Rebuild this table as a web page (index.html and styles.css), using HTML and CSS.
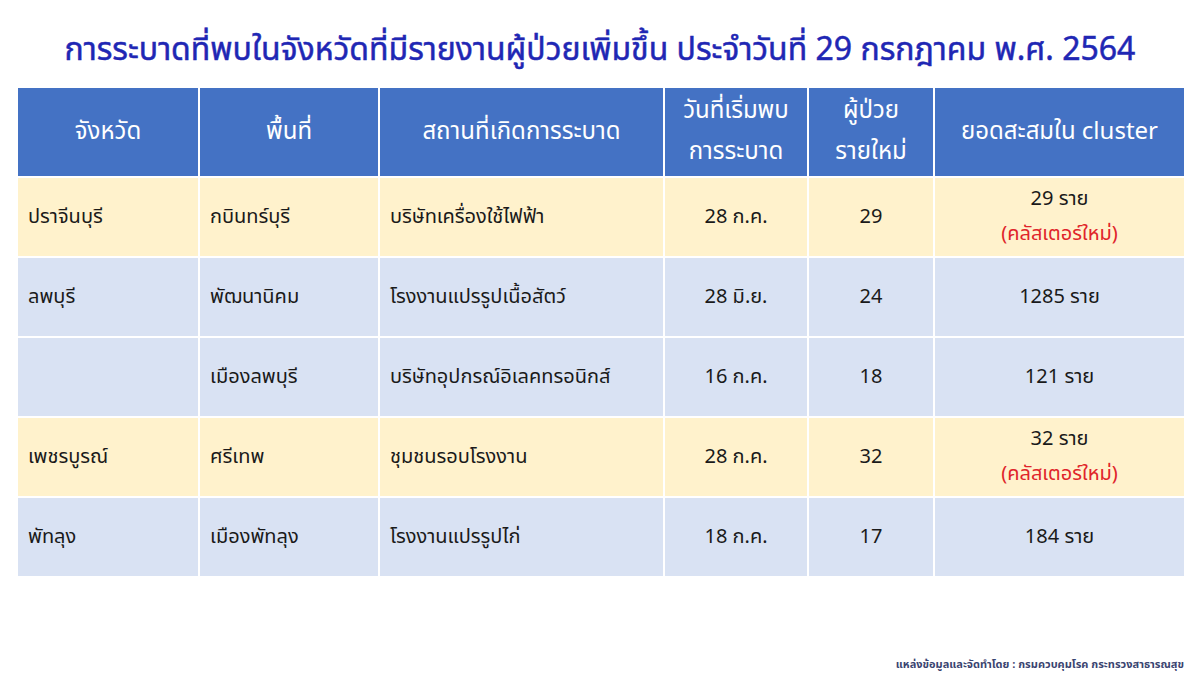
FILE: index.html
```html
<!DOCTYPE html>
<html lang="th">
<head>
<meta charset="utf-8">
<link rel="stylesheet" href="styles.css">
</head>
<body>
<div class="page">
  <h1 class="title">การระบาดที่พบในจังหวัดที่มีรายงานผู้ป่วยเพิ่มขึ้น ประจำวันที่ 29 กรกฎาคม พ.ศ. 2564</h1>
  <table class="grid">
    <colgroup>
      <col class="c1"><col class="c2"><col class="c3"><col class="c4"><col class="c5"><col class="c6">
    </colgroup>
    <thead>
      <tr>
        <th>จังหวัด</th>
        <th>พื้นที่</th>
        <th>สถานที่เกิดการระบาด</th>
        <th>วันที่เริ่มพบ<br>การระบาด</th>
        <th>ผู้ป่วย<br>รายใหม่</th>
        <th>ยอดสะสมใน cluster</th>
      </tr>
    </thead>
    <tbody>
      <tr class="new">
        <td>ปราจีนบุรี</td>
        <td>กบินทร์บุรี</td>
        <td>บริษัทเครื่องใช้ไฟฟ้า</td>
        <td class="mid">28 ก.ค.</td>
        <td class="mid">29</td>
        <td class="mid">29 ราย<br><span class="flag">(คลัสเตอร์ใหม่)</span></td>
      </tr>
      <tr class="old">
        <td>ลพบุรี</td>
        <td>พัฒนานิคม</td>
        <td>โรงงานแปรรูปเนื้อสัตว์</td>
        <td class="mid">28 มิ.ย.</td>
        <td class="mid">24</td>
        <td class="mid">1285 ราย</td>
      </tr>
      <tr class="old">
        <td></td>
        <td>เมืองลพบุรี</td>
        <td>บริษัทอุปกรณ์อิเลคทรอนิกส์</td>
        <td class="mid">16 ก.ค.</td>
        <td class="mid">18</td>
        <td class="mid">121 ราย</td>
      </tr>
      <tr class="new">
        <td>เพชรบูรณ์</td>
        <td>ศรีเทพ</td>
        <td>ชุมชนรอบโรงงาน</td>
        <td class="mid">28 ก.ค.</td>
        <td class="mid">32</td>
        <td class="mid">32 ราย<br><span class="flag">(คลัสเตอร์ใหม่)</span></td>
      </tr>
      <tr class="old">
        <td>พัทลุง</td>
        <td>เมืองพัทลุง</td>
        <td>โรงงานแปรรูปไก่</td>
        <td class="mid">18 ก.ค.</td>
        <td class="mid">17</td>
        <td class="mid">184 ราย</td>
      </tr>
    </tbody>
  </table>
  <p class="source">แหล่งข้อมูลและจัดทำโดย : กรมควบคุมโรค กระทรวงสาธารณสุข</p>
</div>
</body>
</html>
```
FILE: styles.css
```css
html, body {
  margin: 0;
  padding: 0;
  background: #ffffff;
}
.page {
  width: 1200px;
  height: 675px;
  box-sizing: border-box;
  padding: 0 16px 0 16px;
  font-family: "Noto Sans Thai", "Tahoma", "Liberation Sans", "DejaVu Sans", sans-serif;
  display: flex;
  flex-direction: column;
}
.title {
  margin: 28px 0 0 0;
  height: 58px;
  text-align: center;
  font-size: 32px;
  font-weight: normal;
  color: #1f27b4;
  line-height: 44px;
  -webkit-text-stroke: 0.5px #1f27b4;
}
.grid {
  width: 1168px;
  border-collapse: collapse;
  table-layout: fixed;
  font-size: 20px;
  color: #1a1a1a;
}
.c1 { width: 182px; }
.c2 { width: 180px; }
.c3 { width: 285px; }
.c4 { width: 144px; }
.c5 { width: 126px; }
.c6 { width: 251px; }
.grid th, .grid td {
  border: 2px solid #ffffff;
  padding: 0 10px;
}
.grid th {
  background: #4472c4;
  color: #ffffff;
  font-weight: normal;
  font-size: 24px;
  line-height: 41px;
  height: 88px;
  text-align: center;
  white-space: nowrap;
}
.grid td {
  height: 78px;
  line-height: 35px;
  white-space: nowrap;
}
.grid tr.new td { background: #fff2cc; }
.grid tr.old td { background: #d9e2f3; }
.grid td.mid { text-align: center; }
.flag { color: #e0242a; }
.source {
  margin: 78px 0 0 0;
  text-align: right;
  font-size: 11px;
  font-weight: bold;
  color: #3a4470;
}
```
